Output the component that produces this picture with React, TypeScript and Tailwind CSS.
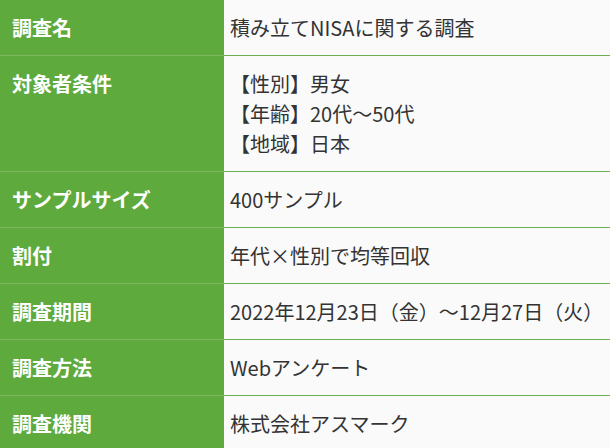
const rows: { label: string; value: string[] }[] = [
    { label: '調査名', value: ['積み立てNISAに関する調査'] },
    { label: '対象者条件', value: ['【性別】男女', '【年齢】20代～50代', '【地域】日本'] },
    { label: 'サンプルサイズ', value: ['400サンプル'] },
    { label: '割付', value: ['年代×性別で均等回収'] },
    { label: '調査期間', value: ['2022年12月23日（金）～12月27日（火）'] },
    { label: '調査方法', value: ['Webアンケート'] },
    { label: '調査機関', value: ['株式会社アスマーク'] },
];

export default function App() {
    return (
        <div
            className="min-h-[448px] w-[610px] bg-[#fafafa] text-[20px] leading-[30px]"
            style={{ fontFamily: '"Noto Sans CJK JP", "Noto Sans", sans-serif' }}
        >
            {rows.map((row) => (
                <div key={row.label} className="grid grid-cols-[224px_1fr]">
                    <div className="border-b border-[#7bbb5e] bg-[#5eaa3d] pt-[13px] pb-[12px] pl-3 font-bold text-white">
                        {row.label}
                    </div>
                    <div className="border-b border-[#6fae52] pt-[13px] pb-[12px] pl-[6px] text-[#333333]">
                        {row.value.map((line) => (
                            <div key={line}>{line}</div>
                        ))}
                    </div>
                </div>
            ))}
        </div>
    );
}
